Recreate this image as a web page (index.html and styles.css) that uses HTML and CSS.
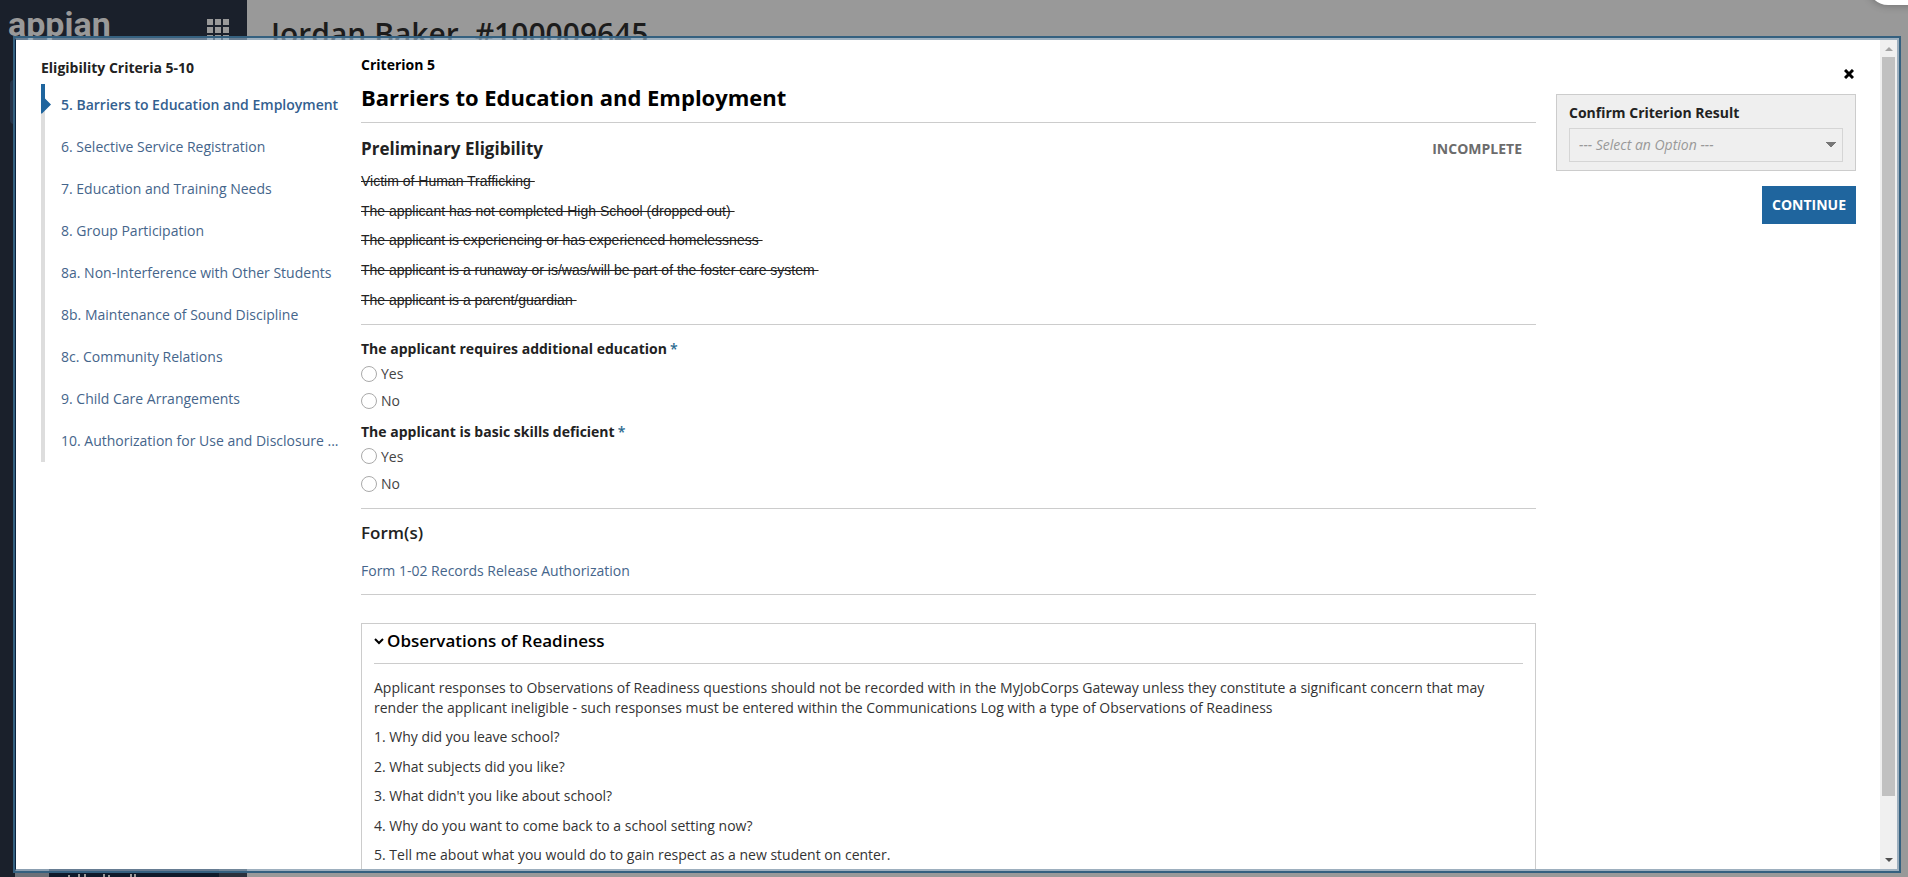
FILE: index.html
```html
<!DOCTYPE html>
<html lang="en">
  <head>
    <meta charset="UTF-8" />
    <meta name="viewport" content="width=device-width, initial-scale=1.0" />
    <title>Eligibility Criteria 5-10</title>
    <link rel="stylesheet" href="styles.css">
  </head>
  <body>
    <div class="site">
      <div class="sidebar">
        <div class="brand">
          <span class="logo">appian</span>
          <svg class="waffle" width="22" height="22" viewBox="0 0 22 22" aria-hidden="true">
            <path d="M0 0h6v6H0zM8 0h6v6H8zM16 0h6v6h-6zM0 8h6v6H0zM8 8h6v6H8zM16 8h6v6h-6zM0 16h6v6H0zM8 16h6v6H8zM16 16h6v6h-6z" />
          </svg>
        </div>
        <div class="site-tab"></div>
        <div class="status-bar">
          <span class="status-chip"></span>
          <svg width="80" height="8" viewBox="0 0 80 8" aria-hidden="true">
            <path d="M2 6h2v2H2zM12 5h2v3h-2zM18 5h2v3h-2zM37 5h2v3h-2zM42 6h2v2h-2zM64 5h2v3h-2zM68 5h2v3h-2z" />
          </svg>
          <span class="status-end"></span>
        </div>
      </div>
      <div class="record">
        <p class="record-title">Jordan Baker, #100009645</p>
      </div>
      <div class="corner-pill"></div>
    </div>

    <div class="modal" role="dialog" aria-label="Eligibility Criteria 5-10">
      <div class="modal-body">
        <nav class="criteria">
          <h2 class="criteria-title">Eligibility Criteria 5-10</h2>
          <ol class="criteria-list">
            <li class="active"><a href="#">5. Barriers to Education and Employment</a></li>
            <li><a href="#">6. Selective Service Registration</a></li>
            <li><a href="#">7. Education and Training Needs</a></li>
            <li><a href="#">8. Group Participation</a></li>
            <li><a href="#">8a. Non-Interference with Other Students</a></li>
            <li><a href="#">8b. Maintenance of Sound Discipline</a></li>
            <li><a href="#">8c. Community Relations</a></li>
            <li><a href="#">9. Child Care Arrangements</a></li>
            <li><a href="#">10. Authorization for Use and Disclosure ...</a></li>
          </ol>
        </nav>

        <main class="content">
          <header class="section heading">
            <p class="criterion">Criterion 5</p>
            <h1>Barriers to Education and Employment</h1>
          </header>

          <section class="section preliminary">
            <div class="section-head">
              <h2>Preliminary Eligibility</h2>
              <span class="status">INCOMPLETE</span>
            </div>
            <ul class="reasons">
              <li><s>Victim of Human Trafficking&nbsp;</s></li>
              <li><s>The applicant has not completed High School (dropped out)&nbsp;</s></li>
              <li><s>The applicant is experiencing or has experienced homelessness&nbsp;</s></li>
              <li><s>The applicant is a runaway or is/was/will be part of the foster care system&nbsp;</s></li>
              <li><s>The applicant is a parent/guardian&nbsp;</s></li>
            </ul>
          </section>

          <form class="section questions">
            <fieldset>
              <legend>The applicant requires additional education<span class="required">*</span></legend>
              <label><input type="radio" name="education" /> Yes</label>
              <label><input type="radio" name="education" /> No</label>
            </fieldset>
            <fieldset>
              <legend>The applicant is basic skills deficient<span class="required">*</span></legend>
              <label><input type="radio" name="skills" /> Yes</label>
              <label><input type="radio" name="skills" /> No</label>
            </fieldset>
          </form>

          <section class="section forms">
            <h2>Form(s)</h2>
            <a href="#">Form 1-02 Records Release Authorization</a>
          </section>

          <section class="box">
            <h2>
              <button type="button" class="box-toggle" aria-expanded="true">
                <svg width="10" height="8" viewBox="0 0 10 8" aria-hidden="true">
                  <path d="M1 2l4 4 4-4" />
                </svg>
                Observations of Readiness
              </button>
            </h2>
            <div class="box-body">
              <p>Applicant responses to Observations of Readiness questions should not be recorded with in the MyJobCorps Gateway unless they constitute a significant concern that may render the applicant ineligible - such responses must be entered within the Communications Log with a type of Observations of Readiness</p>
              <p>1. Why did you leave school?</p>
              <p>2. What subjects did you like?</p>
              <p>3. What didn't you like about school?</p>
              <p>4. Why do you want to come back to a school setting now?</p>
              <p>5. Tell me about what you would do to gain respect as a new student on center.</p>
            </div>
          </section>
        </main>

        <aside class="result">
          <button type="button" class="close" aria-label="Close">
            <svg width="10" height="10" viewBox="0 0 10 10" aria-hidden="true">
              <path d="M1 1l8 8M9 1l-8 8" />
            </svg>
          </button>
          <div class="result-card">
            <label for="criterion-result">Confirm Criterion Result</label>
            <select id="criterion-result">
              <option>--- Select an Option ---</option>
            </select>
          </div>
          <button type="button" class="continue">CONTINUE</button>
        </aside>
      </div>

      <div class="scrollbar" aria-hidden="true">
        <svg class="scroll-up" width="17" height="17" viewBox="0 0 17 17"><path d="M5 11l4-4 4 4z" /></svg>
        <div class="scroll-track"><div class="scroll-thumb"></div></div>
        <svg class="scroll-down" width="17" height="17" viewBox="0 0 17 17"><path d="M5 6h8l-4 4z" /></svg>
      </div>
    </div>
  </body>
</html>
```
FILE: styles.css
```css
* {
  box-sizing: border-box;
}

body {
  margin: 0;
  font-family: 'Open Sans', sans-serif;
  font-size: 14px;
  line-height: 1.4;
  color: #222;
}

h1,
h2,
p,
ul,
ol {
  margin: 0;
  padding: 0;
}

ul,
ol {
  list-style: none;
}

a {
  color: #45658b;
  text-decoration: none;
}

button {
  font-family: inherit;
  border: 0;
  cursor: pointer;
}

/* page behind the dialog */
.site {
  display: flex;
  height: 100vh;
  overflow: hidden;
  position: relative;
  background-color: #999;
}

.sidebar {
  width: 247px;
  display: flex;
  flex-direction: column;
  background-color: #1a202b;
}

.brand {
  display: flex;
  justify-content: space-between;
  align-items: flex-start;
  height: 80px;
  padding: 0 18px 0 8px;
}

.logo {
  font-family: Roboto, sans-serif;
  font-weight: bold;
  font-size: 34px;
  line-height: 48px;
  color: #999;
}

.waffle {
  margin-top: 19px;
  fill: #999;
}

.site-tab {
  height: 44px;
  margin: 0 10px;
  border-radius: 4px;
  background-color: #253348;
}

.status-bar {
  display: flex;
  justify-content: space-between;
  height: 8px;
  margin-top: auto;
  margin-left: 15px;
  background-color: #0f1b2b;
}

.status-bar svg {
  margin-right: auto;
  margin-left: 17px;
  fill: #999;
}

.status-chip {
  width: 34px;
  background-color: #6b7078;
}

.status-end {
  width: 28px;
  background-color: #2b323d;
}

.record {
  flex: 1;
  padding: 13px 24px;
}

.record-title {
  font-size: 30px;
  font-weight: 600;
  color: #1c1c1c;
}

.corner-pill {
  position: absolute;
  top: -35px;
  right: -40px;
  width: 80px;
  height: 40px;
  border-radius: 20px;
  background-color: #fff;
  box-shadow: 0 0 8px rgba(0, 0, 0, 0.3);
}

/* dialog */
.modal {
  position: fixed;
  top: 38px;
  right: 9px;
  bottom: 6px;
  left: 15px;
  display: flex;
  border: 2px solid rgba(160, 190, 215, 0.6);
  border-left: 1px solid #0b2440;
  outline: 2px solid #34607f;
  background-color: #fff;
  background-clip: padding-box;
}

.modal-body {
  flex: 1;
  display: grid;
  grid-template-columns: 300px 1fr 300px;
  gap: 20px;
  padding: 15px 24px 0 25px;
  overflow: hidden;
}

.criteria-title {
  padding-top: 3px;
  margin-bottom: 6px;
  font-size: 14px;
  font-weight: 700;
}

.criteria-list {
  border-left: 4px solid #ddd;
}

.criteria-list li {
  display: flex;
  align-items: center;
  height: 42px;
  padding-left: 16px;
}

.criteria-list .active {
  position: relative;
  font-weight: 600;
}

.criteria-list .active a {
  color: #33608f;
}

.active::before {
  content: '';
  position: absolute;
  top: 0;
  left: -4px;
  width: 10px;
  height: 30px;
  background-color: #1f659e;
  clip-path: polygon(0 0, 4px 0, 4px 15px, 10px 21px, 1px 30px, 0 30px);
}

.section {
  border-bottom: 1px solid #ccc;
}

.content h2 {
  font-size: 17px;
  font-weight: 700;
}

.criterion {
  font-weight: 700;
  color: #000;
}

.heading {
  padding-bottom: 10px;
}

h1 {
  margin-top: 7px;
  font-size: 22px;
  font-weight: 700;
  color: #000;
}

.preliminary {
  padding: 14px 0;
}

.section-head {
  display: flex;
  justify-content: space-between;
  align-items: center;
  padding-right: 14px;
}

.status {
  font-weight: 700;
  color: #6c6c6c;
}

.reasons {
  display: grid;
  gap: 10px;
  margin-top: 11px;
  font-family: 'Liberation Sans', Arial, sans-serif;
}

.questions {
  padding: 14px 0;
}

fieldset {
  display: grid;
  gap: 8px;
  min-width: 0;
  margin: 0;
  padding: 0;
  border: 0;
}

fieldset + fieldset {
  margin-top: 11px;
}

legend {
  margin-bottom: 5px;
  padding: 0;
  font-weight: 700;
}

.required {
  margin-left: 3px;
  font-weight: 600;
  color: #2b6a8f;
}

fieldset label {
  display: flex;
  align-items: center;
  gap: 4px;
  color: #444;
}

input[type='radio'] {
  appearance: none;
  width: 16px;
  height: 16px;
  margin: 0;
  border: 1px solid #aaa;
  border-radius: 50%;
}

.forms {
  padding: 12px 0 14px;
}

.forms a {
  display: block;
  margin-top: 16px;
}

.content .forms h2 {
  font-weight: 600;
}

.box {
  margin-top: 28px;
  padding: 5px 12px 14px;
  border: 1px solid #ccc;
}

.box h2 {
  padding-bottom: 10px;
  border-bottom: 1px solid #ccc;
}

.box-toggle {
  display: flex;
  align-items: center;
  gap: 3px;
  padding: 0;
  font-size: 17px;
  font-weight: 600;
  line-height: 1.4;
  color: #000;
  background: none;
}

.box-toggle svg,
.close svg {
  fill: none;
  stroke: #000;
  stroke-width: 2;
}

.box-body {
  display: grid;
  gap: 10px;
  margin-top: 14px;
  color: #333;
}

/* right column */
.result {
  display: flex;
  flex-direction: column;
  align-items: flex-end;
}

.close {
  display: flex;
  margin: 14px 2px 15px 0;
  padding: 0;
  background: none;
}

.close svg {
  stroke-width: 3;
}

.result-card {
  width: 100%;
  padding: 8px 12px;
  border: 1px solid #ccc;
  background-color: #efefef;
}

.result-card label {
  display: block;
  margin-bottom: 5px;
  font-weight: 700;
}

select {
  appearance: none;
  display: block;
  width: 100%;
  height: 34px;
  padding: 0 9px;
  border: 1px solid #d5d5d5;
  border-radius: 0;
  font-family: inherit;
  font-size: 14px;
  font-style: italic;
  font-weight: 400;
  color: #999;
  background: conic-gradient(from -45deg at 50% 100%, #777 90deg, transparent 0) no-repeat right 6px center / 10px 5px;
}

.continue {
  height: 38px;
  margin-top: 15px;
  padding: 0 10px;
  font-size: 14px;
  font-weight: 700;
  color: #fff;
  background-color: #1f659e;
}

.scrollbar {
  display: flex;
  flex-direction: column;
  width: 17px;
  background-color: #f0f0f0;
}

.scroll-up {
  fill: #a3a3a3;
}

.scroll-down {
  fill: #505050;
}

.scroll-track {
  flex: 1;
  padding: 0 2px;
}

.scroll-thumb {
  height: 93%;
  background-color: #c1c1c1;
}
```
